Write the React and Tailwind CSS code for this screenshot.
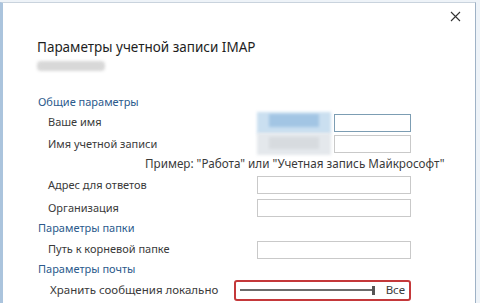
import React from 'react';

const font = { fontFamily: '"Noto Sans", "Open Sans", sans-serif' };

function Section({ title, className = '' }) {
  return (
    <div className={`flex items-center pl-[35px] text-[11px] text-[#2b5a8c] ${className}`}>
      {title}
    </div>
  );
}

function Row({ label, className = '', children }) {
  return (
    <div className={`flex items-center ${className}`}>
      <div className="w-[254px] pl-[45px] text-[11px] text-[#3a3a3a]">{label}</div>
      <div className="flex h-full w-[160px] items-center">{children}</div>
    </div>
  );
}

function Field({ wide = true, focused = false }) {
  return (
    <div
      className={`h-[18px] border bg-white ${wide ? 'w-[154px]' : 'w-[77px]'} ${
        focused ? 'border-[#7c9db3]' : 'border-[#c9c9c9]'
      }`}
    />
  );
}

export default function App() {
  return (
    <div className="h-[303px] w-[480px] overflow-hidden bg-[#eef3f8]" style={font}>
      <div className="mt-[2px] h-[301px] w-[476px] border-l-[3px] border-t border-r border-l-[#abc4dd] border-t-[#c9d3dd] border-r-[#9fb2c6] bg-white">
        {/* header */}
        <div className="flex h-[33px] justify-end pr-[14px] pt-[8px]">
          <svg width="11" height="11" viewBox="0 0 11 11">
            <path d="M1 1 L10 10 M10 1 L1 10" stroke="#333" strokeWidth="1.1" />
          </svg>
        </div>
        <div className="pl-[34px] text-[13.5px] leading-[22px] text-[#1e1e1e]">
          Параметры учетной записи IMAP
        </div>
        <div className="ml-[34px] mt-[3px] h-[10px] w-[68px] rounded-sm bg-[#d8d8d8] blur-[1.5px]" />

        <div className="mt-[20px]">
          <Section title="Общие параметры" className="h-[22px]" />
          <Row label="Ваше имя" className="h-[19px]">
            <div className="mr-[3px] h-[22px] w-[74px] bg-[#cadff0] blur-[1.5px]">
              <div className="ml-[12px] mt-[2px] h-[13px] w-[50px] bg-[#a2c5e4]" />
            </div>
            <Field wide={false} focused />
          </Row>
          <Row label="Имя учетной записи" className="h-[24px]">
            <div className="mr-[3px] h-[22px] w-[74px] bg-[#e4e8ec] blur-[1.5px]">
              <div className="ml-[12px] mt-[4px] h-[12px] w-[50px] bg-[#d7dbdf]" />
            </div>
            <Field wide={false} />
          </Row>
          <div className="flex h-[15px] items-center pl-[142px] text-[11.7px] text-[#3a3a3a]">
            Пример: "Работа" или "Учетная запись Майкрософт"
          </div>
          <Row label="Адрес для ответов" className="h-[28px]">
            <Field />
          </Row>
          <Row label="Организация" className="h-[18px]">
            <Field />
          </Row>
          <Section title="Параметры папки" className="h-[23px]" />
          <Row label="Путь к корневой папке" className="h-[19px]">
            <Field />
          </Row>
          <Section title="Параметры почты" className="h-[20px]" />
          <div className="flex h-[22px] items-center">
            <div className="w-[231px] pl-[47px] text-[11.5px] text-[#3a3a3a]">Хранить сообщения локально</div>
            <div className="flex h-[21px] w-[177px] items-center rounded-[3px] border-2 border-[#c4383a] pl-[4px] pr-[4px]">
              <div className="h-[2px] w-[132px] bg-[#6b6b6b]" />
              <div className="h-[9px] w-[3px] bg-[#555]" />
              <div className="ml-auto text-[11.5px] text-[#3a3a3a]">Все</div>
            </div>
          </div>
        </div>
      </div>
    </div>
  );
}
